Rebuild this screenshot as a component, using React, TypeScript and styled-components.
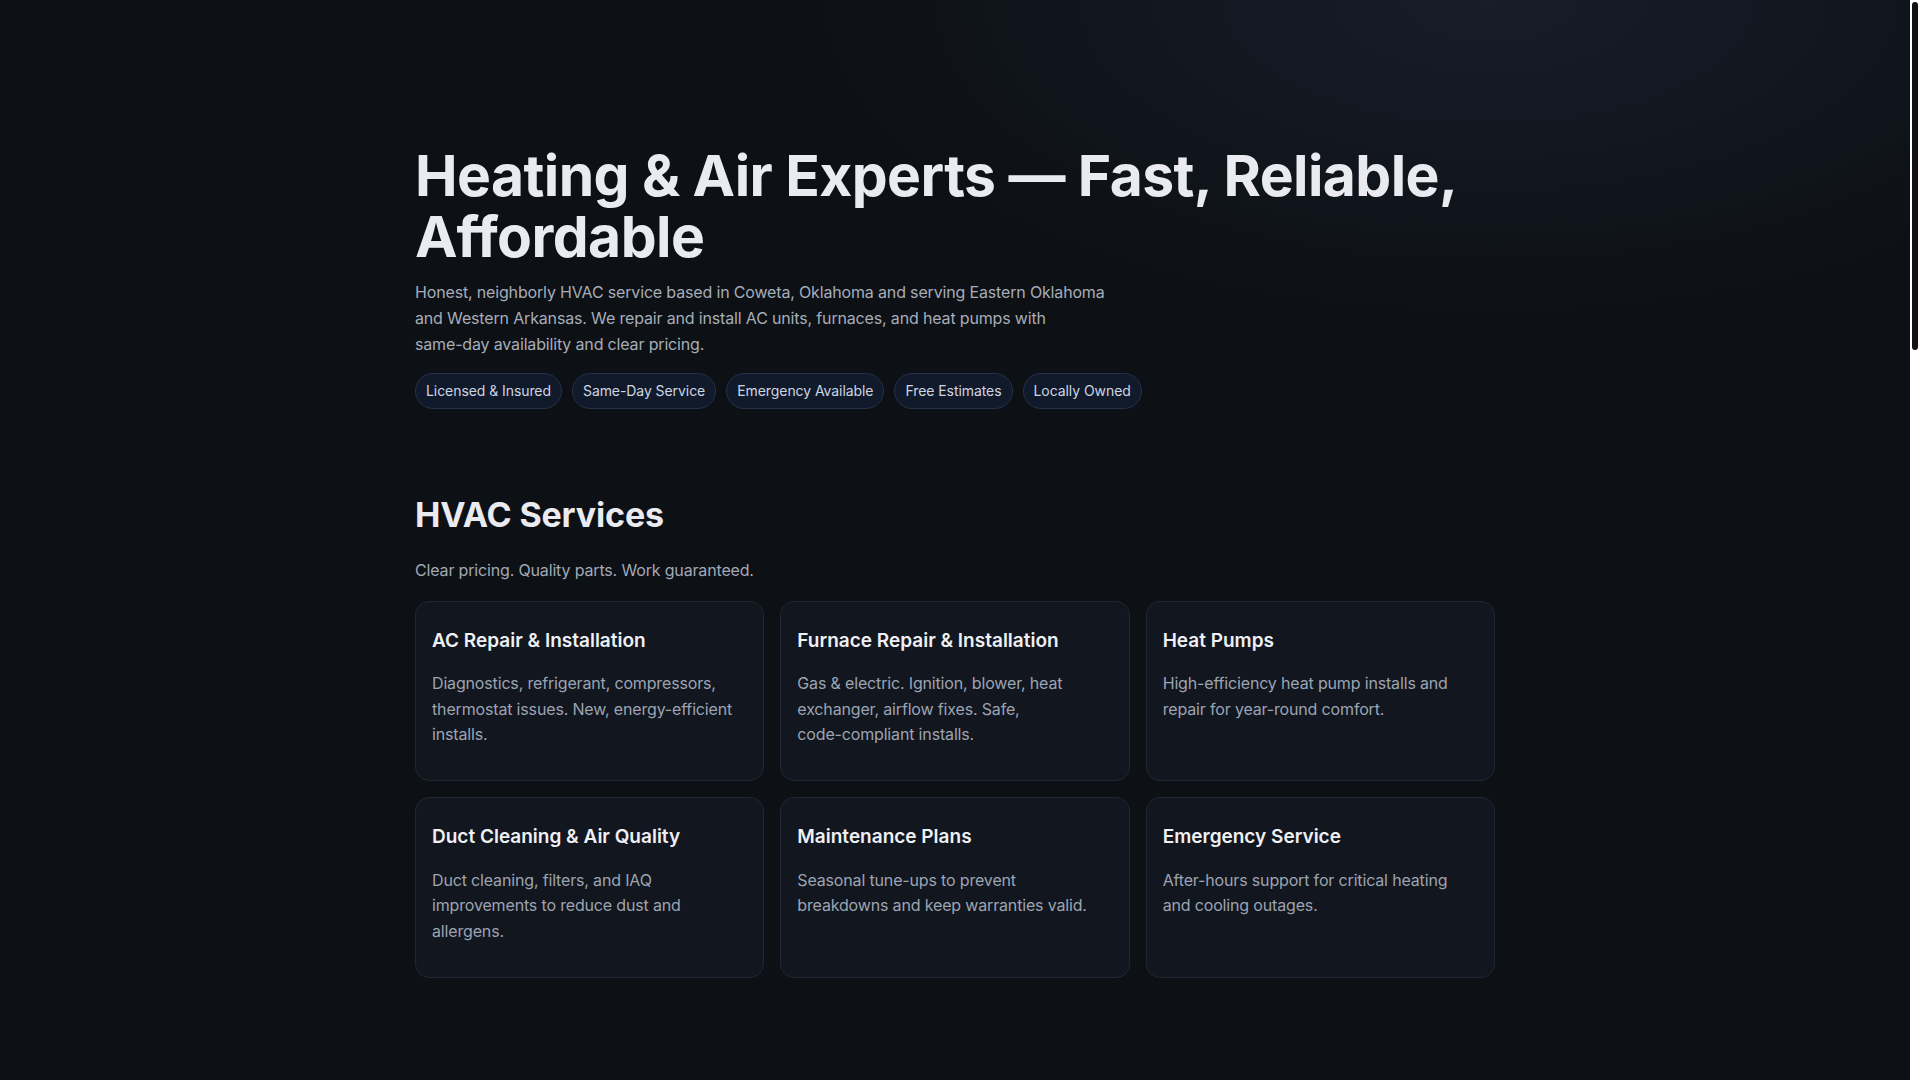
import React, { useLayoutEffect, useRef, useState } from "react";
import styled, { createGlobalStyle } from "styled-components";

const GlobalStyle = createGlobalStyle`
  html,
  body {
    height: 100%;
  }
  body {
    margin: 0;
    overflow: hidden;
    background-color: #0d1015;
    color: #e9ebf0;
    font-family: Inter, "Noto Sans", "Liberation Sans", sans-serif;
    -webkit-font-smoothing: antialiased;
  }
  * {
    box-sizing: border-box;
  }
`;

const Page = styled.div`
  display: flex;
  height: 100vh;
  overflow: hidden;
`;

const Scroller = styled.main`
  flex: 1;
  min-width: 0;
  overflow-y: auto;
  scrollbar-width: none;
  background-color: #0d1015;
  background-image: radial-gradient(
    ellipse 900px 420px at 78% 0%,
    rgba(30, 40, 58, 0.55),
    rgba(13, 16, 21, 0) 75%
  );
  background-repeat: no-repeat;
  background-attachment: local;

  &::-webkit-scrollbar {
    display: none;
  }
`;

const Rail = styled.div`
  position: relative;
  flex: none;
  width: 10px;
  background: #ffffff;
`;

const Thumb = styled.div`
  position: absolute;
  left: 2px;
  right: 2px;
  border-radius: 3px;
  background: #121212;
`;

const Container = styled.div`
  max-width: 1080px;
  margin: 0 auto;
`;

const Hero = styled.header`
  padding: 146px 0 86px;
`;

const Title = styled.h1`
  margin: 0 0 13px;
  font-size: 57px;
  line-height: 1.065;
  font-weight: 700;
  letter-spacing: -0.01em;
  color: #e9ebf0;
`;

const Lead = styled.p`
  margin: 0 0 16px;
  max-width: 696px;
  font-size: 16px;
  line-height: 1.6;
  letter-spacing: -0.01em;
  color: #a6adb9;
`;

const NoWrap = styled.span`
  white-space: nowrap;
`;

const Chips = styled.ul`
  display: flex;
  flex-wrap: wrap;
  gap: 10px;
  margin: 0;
  padding: 0;
  list-style: none;
`;

const Chip = styled.li`
  padding: 7px 10px;
  border: 1px solid #26314a;
  border-radius: 999px;
  background: #111a2a;
  font-size: 14px;
  line-height: 20px;
  letter-spacing: -0.005em;
  color: #cdd5e3;
`;

const Section = styled.section<{ $last?: boolean }>`
  padding: 0 0 ${p => (p.$last ? 48 : 96)}px;
`;

const SectionTitle = styled.h2`
  margin: 0 0 22px;
  font-size: 34px;
  line-height: 1.2;
  font-weight: 700;
  letter-spacing: -0.005em;
  color: #e9ebf0;
`;

const SectionLead = styled.p`
  margin: 0 0 17px;
  font-size: 16px;
  line-height: 1.6;
  letter-spacing: -0.01em;
  color: #a2a9b5;
`;

const Grid = styled.div`
  display: grid;
  grid-template-columns: repeat(3, 1fr);
  gap: 16px;
`;

const Card = styled.article`
  padding: 27px 20px 32px 16px;
  border: 1px solid #202733;
  border-radius: 14px;
  background: #12161f;
`;

const CardTitle = styled.h3`
  margin: 0 0 18px;
  font-size: 19px;
  line-height: 1.3;
  font-weight: 600;
  color: #eef0f4;
`;

const CardText = styled.p`
  margin: 0;
  font-size: 16px;
  line-height: 1.6;
  letter-spacing: -0.01em;
  color: #9ca4b2;
`;

const Quote = styled.blockquote`
  margin: 0;
  padding: 22px 16px;
  border: 1px solid #202733;
  border-radius: 14px;
  background: #12161f;
  font-size: 16px;
  line-height: 1.6;
  letter-spacing: -0.01em;
  color: #b5bcc8;

  cite {
    display: block;
    margin-top: 12px;
    font-style: normal;
    font-size: 14px;
    color: #7f8897;
  }
`;

const FaqList = styled.div`
  display: flex;
  flex-direction: column;
  gap: 12px;
`;

const FaqItem = styled.div`
  padding: 16px;
  border: 1px solid #202733;
  border-radius: 12px;
  background: #12161f;
`;

const FaqQuestion = styled.h3`
  margin: 0;
  font-size: 17px;
  font-weight: 600;
  color: #eef0f4;
`;

const FaqAnswer = styled.p`
  margin: 10px 0 0;
  line-height: 1.6;
  letter-spacing: -0.01em;
  color: #9ca4b2;
`;

const Form = styled.form`
  display: grid;
  grid-template-columns: 1fr 1fr;
  gap: 14px;
  padding: 24px;
  border: 1px solid #202733;
  border-radius: 14px;
  background: #12161f;
`;

const Field = styled.label<{ $wide?: boolean }>`
  display: flex;
  flex-direction: column;
  gap: 6px;
  grid-column: ${p => (p.$wide ? "1 / -1" : "auto")};
  font-size: 14px;
  color: #b5bcc8;
`;

const Input = styled.input`
  padding: 10px 12px;
  border: 1px solid #26314a;
  border-radius: 10px;
  background: #0e131c;
  color: #e9ebf0;
  font: inherit;
  font-size: 15px;
`;

const TextArea = styled.textarea`
  min-height: 110px;
  padding: 10px 12px;
  border: 1px solid #26314a;
  border-radius: 10px;
  background: #0e131c;
  color: #e9ebf0;
  font: inherit;
  font-size: 15px;
  resize: vertical;
`;

const Cta = styled.div`
  display: flex;
  align-items: center;
  justify-content: space-between;
  gap: 24px;
  padding: 32px;
  border: 1px solid #26314a;
  border-radius: 16px;
  background: #111a2a;
`;

const CtaTitle = styled.h3`
  margin: 0 0 8px;
  font-size: 24px;
  color: #eef0f4;
`;

const CtaText = styled.p`
  margin: 0;
  color: #a6adb9;
`;

const Button = styled.button`
  justify-self: start;
  padding: 12px 20px;
  border: 0;
  border-radius: 10px;
  background: #3b82f6;
  color: #fff;
  font: inherit;
  font-weight: 600;
  white-space: nowrap;
`;

const Footer = styled.footer`
  padding: 32px 0 48px;
  border-top: 1px solid #1b212b;
  font-size: 14px;
  color: #7f8897;
`;

// keep hyphenated words together, as the reference wraps them whole
function Text({ children }: { children: string }) {
  const parts = children.split(/(\S*-\S*)/);
  return (
    <>
      {parts.map((part, i) =>
        part.includes("-") && !/\s/.test(part) ? <NoWrap key={i}>{part}</NoWrap> : part
      )}
    </>
  );
}

const services = [
  {
    title: "AC Repair & Installation",
    text: "Diagnostics, refrigerant, compressors, thermostat issues. New, energy-efficient installs.",
  },
  {
    title: "Furnace Repair & Installation",
    text: "Gas & electric. Ignition, blower, heat exchanger, airflow fixes. Safe, code-compliant installs.",
  },
  {
    title: "Heat Pumps",
    text: "High-efficiency heat pump installs and repair for year-round comfort.",
  },
  {
    title: "Duct Cleaning & Air Quality",
    text: "Duct cleaning, filters, and IAQ improvements to reduce dust and allergens.",
  },
  {
    title: "Maintenance Plans",
    text: "Seasonal tune-ups to prevent breakdowns and keep warranties valid.",
  },
  {
    title: "Emergency Service",
    text: "After-hours support for critical heating and cooling outages.",
  },
];

const badges = [
  "Licensed & Insured",
  "Same-Day Service",
  "Emergency Available",
  "Free Estimates",
  "Locally Owned",
];

const towns = [
  "Coweta",
  "Broken Arrow",
  "Tulsa",
  "Wagoner",
  "Muskogee",
  "Okmulgee",
  "Bixby",
  "Fort Smith, AR",
  "Van Buren, AR",
  "Siloam Springs, AR",
];

const reasons = [
  { title: "Upfront Pricing", text: "You approve the price before any work begins. No surprises on the bill." },
  { title: "Trained Technicians", text: "Background-checked, certified techs who treat your home with respect." },
  { title: "Satisfaction Guaranteed", text: "If something isn't right, we come back and make it right." },
];

const reviews = [
  { text: "Came out the same day our AC quit in July. Fair price and explained everything.", who: "— Sarah M., Coweta" },
  { text: "Replaced our old furnace quickly and cleaned up after. Highly recommend.", who: "— James T., Broken Arrow" },
  { text: "Honest techs who don't upsell. Our maintenance plan has paid for itself.", who: "— Linda R., Wagoner" },
];

const faqs = [
  { q: "Do you offer free estimates?", a: "Yes. Estimates on new installs and replacements are always free." },
  { q: "How fast can you get here?", a: "Most calls are handled the same day, and emergency service is available after hours." },
  { q: "What brands do you service?", a: "We repair and install all major brands of AC units, furnaces and heat pumps." },
  { q: "Do you offer financing?", a: "Flexible financing options are available on qualifying system installs." },
];

function useScrollThumb() {
  const ref = useRef<HTMLElement>(null);
  const [thumb, setThumb] = useState({ top: 2, height: 0 });

  useLayoutEffect(() => {
    const el = ref.current;
    if (!el) return;
    const update = () => {
      const track = el.clientHeight - 4;
      const ratio = el.clientHeight / el.scrollHeight;
      const height = Math.max(24, track * ratio);
      const max = el.scrollHeight - el.clientHeight;
      const top = 2 + (max > 0 ? (el.scrollTop / max) * (track - height) : 0);
      setThumb({ top, height: ratio < 1 ? height : 0 });
    };
    update();
    el.addEventListener("scroll", update);
    window.addEventListener("resize", update);
    return () => {
      el.removeEventListener("scroll", update);
      window.removeEventListener("resize", update);
    };
  }, []);

  return { ref, thumb };
}

export default function App() {
  const { ref, thumb } = useScrollThumb();

  return (
    <Page>
      <GlobalStyle />
      <Scroller ref={ref}>
        <Container>
          <Hero>
            <Title>Heating &amp; Air Experts — Fast, Reliable, Affordable</Title>
            <Lead>
              <Text>
                Honest, neighborly HVAC service based in Coweta, Oklahoma and serving Eastern Oklahoma and Western Arkansas. We repair and install AC units, furnaces, and heat pumps with same-day availability and clear pricing.
              </Text>
            </Lead>
            <Chips>
              {badges.map(b => (
                <Chip key={b}>{b}</Chip>
              ))}
            </Chips>
          </Hero>

          <Section>
            <SectionTitle>HVAC Services</SectionTitle>
            <SectionLead>Clear pricing. Quality parts. Work guaranteed.</SectionLead>
            <Grid>
              {services.map(s => (
                <Card key={s.title}>
                  <CardTitle>{s.title}</CardTitle>
                  <CardText>
                    <Text>{s.text}</Text>
                  </CardText>
                </Card>
              ))}
            </Grid>
          </Section>

          <Section>
            <SectionTitle>Our Service Area</SectionTitle>
            <SectionLead>
              Based in Coweta and serving homes and businesses across Eastern Oklahoma and Western Arkansas.
            </SectionLead>
            <Chips>
              {towns.map(t => (
                <Chip key={t}>{t}</Chip>
              ))}
            </Chips>
          </Section>

          <Section>
            <SectionTitle>Why Choose Us</SectionTitle>
            <SectionLead>Local people, honest work, fair prices.</SectionLead>
            <Grid>
              {reasons.map(r => (
                <Card key={r.title}>
                  <CardTitle>{r.title}</CardTitle>
                  <CardText>
                    <Text>{r.text}</Text>
                  </CardText>
                </Card>
              ))}
            </Grid>
          </Section>

          <Section>
            <SectionTitle>What Neighbors Say</SectionTitle>
            <SectionLead>Real reviews from local homeowners.</SectionLead>
            <Grid>
              {reviews.map(r => (
                <Quote key={r.who}>
                  “{r.text}”<cite>{r.who}</cite>
                </Quote>
              ))}
            </Grid>
          </Section>

          <Section>
            <SectionTitle>Frequently Asked Questions</SectionTitle>
            <FaqList>
              {faqs.map(f => (
                <FaqItem key={f.q}>
                  <FaqQuestion>{f.q}</FaqQuestion>
                  <FaqAnswer>{f.a}</FaqAnswer>
                </FaqItem>
              ))}
            </FaqList>
          </Section>

          <Section>
            <SectionTitle>Request Service</SectionTitle>
            <SectionLead>Tell us what's going on and we'll call you back within the hour.</SectionLead>
            <Form onSubmit={e => e.preventDefault()}>
              <Field>
                Name
                <Input placeholder="Your name" />
              </Field>
              <Field>
                Phone
                <Input placeholder="(918) 555-0142" />
              </Field>
              <Field $wide>
                What do you need help with?
                <TextArea placeholder="AC not cooling, furnace won't start, new install…" />
              </Field>
              <Button type="submit">Send Request</Button>
            </Form>
          </Section>

          <Section $last>
            <Cta>
              <div>
                <CtaTitle>Need heating or cooling help today?</CtaTitle>
                <CtaText>Call now for same-day service and a free estimate.</CtaText>
              </div>
              <Button type="button">Call (918) 555-0142</Button>
            </Cta>
          </Section>

          <Footer>© 2025 Heating &amp; Air Experts · Coweta, Oklahoma · Licensed &amp; Insured</Footer>
        </Container>
      </Scroller>
      <Rail>
        <Thumb style={{ top: thumb.top, height: thumb.height }} />
      </Rail>
    </Page>
  );
}
